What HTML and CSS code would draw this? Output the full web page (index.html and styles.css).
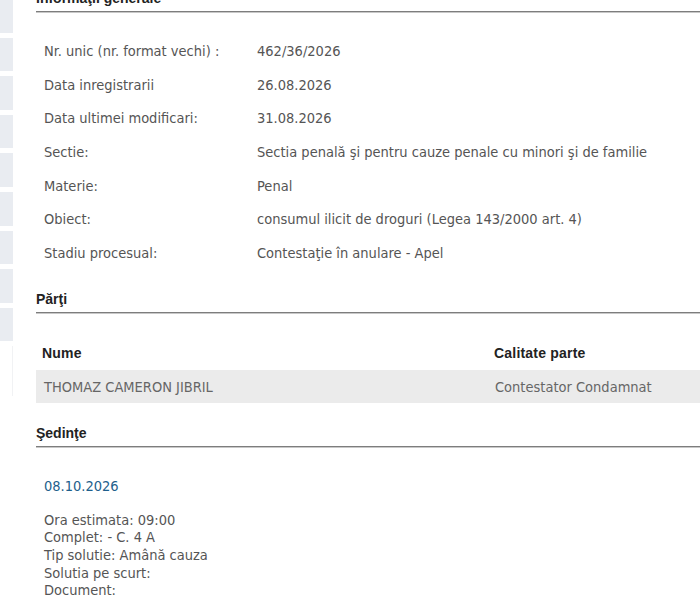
FILE: index.html
```html
<!DOCTYPE html>
<html lang="ro">
<head>
<meta charset="utf-8">
<title>Dosar</title>
<link rel="stylesheet" href="styles.css">
</head>
<body>
<div class="page">
  <aside class="sidebar">
    <div class="side-item"></div>
    <div class="side-item"></div>
    <div class="side-item"></div>
    <div class="side-item"></div>
    <div class="side-item"></div>
    <div class="side-item"></div>
    <div class="side-item"></div>
    <div class="side-item"></div>
    <div class="side-item"></div>
    <div class="side-rest"></div>
  </aside>
  <main class="content">
    <h2 class="section-title first">Informaţii generale</h2>
    <div class="info">
      <div class="label">Nr. unic (nr. format vechi) :</div><div class="value">462/36/2026</div>
      <div class="label">Data inregistrarii</div><div class="value">26.08.2026</div>
      <div class="label">Data ultimei modificari:</div><div class="value">31.08.2026</div>
      <div class="label">Sectie:</div><div class="value">Sectia penală şi pentru cauze penale cu minori şi de familie</div>
      <div class="label">Materie:</div><div class="value">Penal</div>
      <div class="label">Obiect:</div><div class="value">consumul ilicit de droguri (Legea 143/2000 art. 4)</div>
      <div class="label">Stadiu procesual:</div><div class="value">Contestaţie în anulare - Apel</div>
    </div>

    <h2 class="section-title parti">Părţi</h2>
    <div class="parties">
      <div class="prow head"><div class="pname">Nume</div><div class="pcal">Calitate parte</div></div>
      <div class="prow data"><div class="pname">THOMAZ CAMERON JIBRIL</div><div class="pcal">Contestator Condamnat</div></div>
    </div>

    <h2 class="section-title sedinte">Şedinţe</h2>
    <div class="session">
      <div class="session-date">08.10.2026</div>
      <div class="session-info">
        <div>Ora estimata: 09:00</div>
        <div>Complet: - C. 4 A</div>
        <div>Tip solutie: Amână cauza</div>
        <div>Solutia pe scurt:</div>
        <div>Document:</div>
      </div>
    </div>
  </main>
</div>
</body>
</html>
```

FILE: styles.css
```css
html, body {
  margin: 0;
  padding: 0;
  background: #ffffff;
  overflow: hidden;
}
.page {
  display: flex;
  width: 700px;
  height: 596px;
  overflow: hidden;
}
.sidebar {
  width: 13px;
  flex: 0 0 13px;
  display: flex;
  flex-direction: column;
  gap: 5px;
  margin-top: -1px;
}
.side-item {
  height: 33.6px;
  background: #e9ecf1;
}
.side-rest {
  height: 50px;
  border-right: 1px solid #f1f2f4;
}
.content {
  flex: 1;
  margin-left: 23px;
  min-width: 0;
  font-family: "DejaVu Sans Condensed", "DejaVu Sans", sans-serif;
  font-size: 14.5px;
  color: #555555;
}
.section-title {
  font-family: "Liberation Sans", Arial, sans-serif;
  font-weight: bold;
  font-size: 14px;
  line-height: 16px;
  color: #222222;
  margin: 0;
  padding: 0 0 5px 0;
  border-bottom: 1px solid #7d7d7d;
  box-shadow: 0 1px 0 #c8c8c8;
  width: 664px;
}
.section-title.first {
  margin-top: -10px;
}
.info {
  display: grid;
  grid-template-columns: 213px 1fr;
  grid-auto-rows: 33.7px;
  align-items: center;
  margin-top: 22px;
  padding-left: 8px;
  white-space: nowrap;
}
.section-title.parti {
  margin-top: 21px;
}
.parties {
  margin-top: 23.5px;
  width: 664px;
}
.prow {
  display: grid;
  grid-template-columns: 452px 1fr;
  align-items: center;
  height: 33.5px;
  padding-left: 6px;
  white-space: nowrap;
}
.prow.head {
  font-family: "Liberation Sans", Arial, sans-serif;
  font-weight: bold;
  font-size: 14px;
  color: #222222;
  letter-spacing: 0.2px;
}
.prow.data {
  background: #ebebeb;
  color: #666666;
  padding-left: 8px;
  grid-template-columns: 451px 1fr;
}
.section-title.sedinte {
  margin-top: 21.5px;
}
.session {
  padding-left: 8px;
}
.session-date {
  margin-top: 30px;
  color: #1e5f8c;
  line-height: 18px;
}
.session-info {
  margin-top: 17px;
  line-height: 17.6px;
}
```
